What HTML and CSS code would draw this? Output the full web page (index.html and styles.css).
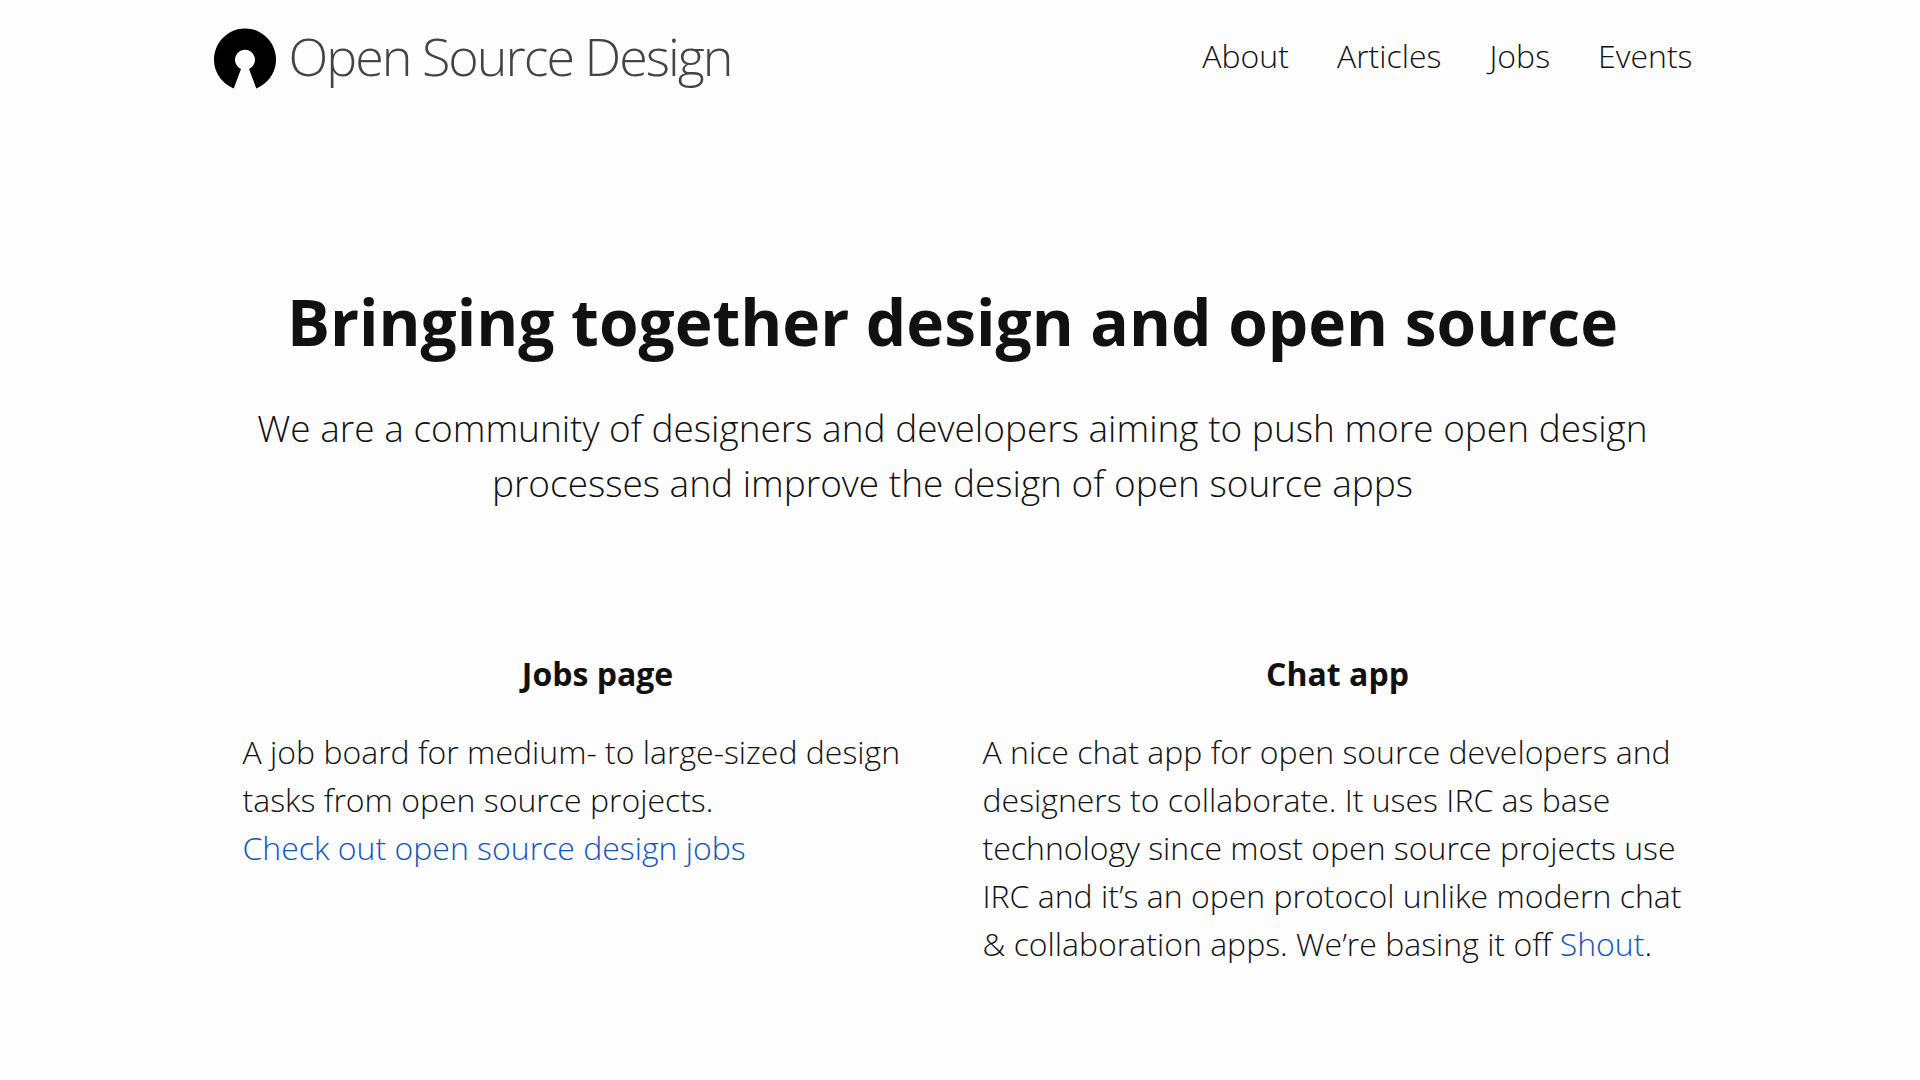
FILE: index.html
```html
<!DOCTYPE html>
<html lang="en">
<head>
<meta charset="utf-8">
<meta name="viewport" content="width=device-width, initial-scale=1">
<title>Open Source Design</title>
<link rel="stylesheet" href="styles.css">
</head>
<body>
<div class="container">
  <header class="site-header">
    <a class="brand" href="#">
      <svg class="brand-mark" viewBox="0 0 64 64" aria-hidden="true"><path d="M20.700 60.400A31 31 0 1 1 43.300 60.400L36 41A10 10 0 1 0 28 41Z"/></svg>
      <span>Open Source Design</span>
    </a>
    <nav class="site-nav">
      <a href="#">About</a>
      <a href="#">Articles</a>
      <a href="#">Jobs</a>
      <a href="#">Events</a>
    </nav>
  </header>
  <main>
    <section class="intro">
      <h1>Bringing together design and open source</h1>
      <p>We are a community of designers and developers aiming to push more open design processes and improve the design of open source apps</p>
    </section>
    <div class="projects">
      <section class="project">
        <h2>Jobs page</h2>
        <p>A job board for medium- to large-sized design tasks from open source projects.<br><a href="#">Check out open source design jobs</a></p>
      </section>
      <section class="project">
        <h2>Chat app</h2>
        <p>A nice chat app for open source developers and designers to collaborate. It uses IRC as base technology since most open source projects use IRC and it’s an open protocol unlike modern chat &amp; collaboration apps. We’re basing it off <a href="#">Shout</a>.</p>
      </section>
    </div>
  </main>
</div>
</body>
</html>
```
FILE: styles.css
```css
* { box-sizing: border-box; }
body {
  margin: 0;
  padding-right: 15px;
  background: #fdfdfd;
  color: #111;
  font: 300 32px/48px "Open Sans", sans-serif;
}
a { color: #15b; text-decoration: none; }
h1, h2, p { margin: 0; }
.container { max-width: 1480px; margin: 0 auto; }
.site-header {
  display: flex;
  justify-content: space-between;
  padding-top: 28px;
}
.brand {
  display: flex;
  align-items: flex-start;
  gap: 12px;
  color: #444;
  font-size: 52px;
  line-height: 56px;
  letter-spacing: -2px;
}
.brand-mark { width: 64px; height: 64px; fill: #000; }
.site-nav { display: flex; gap: 48px; padding-top: 4px; }
.site-nav a { color: #111; }
.intro { padding: 190px 24px 0; text-align: center; }
.intro h1 { font-size: 64px; line-height: 80px; font-weight: 700; }
.intro p { margin-top: 38px; font-size: 37px; line-height: 55px; }
.projects {
  display: grid;
  grid-template-columns: 1fr 1fr;
  padding-top: 140px;
}
.project { padding-left: 30px; }
.project h2 { font-size: 32px; line-height: 48px; font-weight: 700; text-align: center; }
.project p { margin-top: 30px; }
```
